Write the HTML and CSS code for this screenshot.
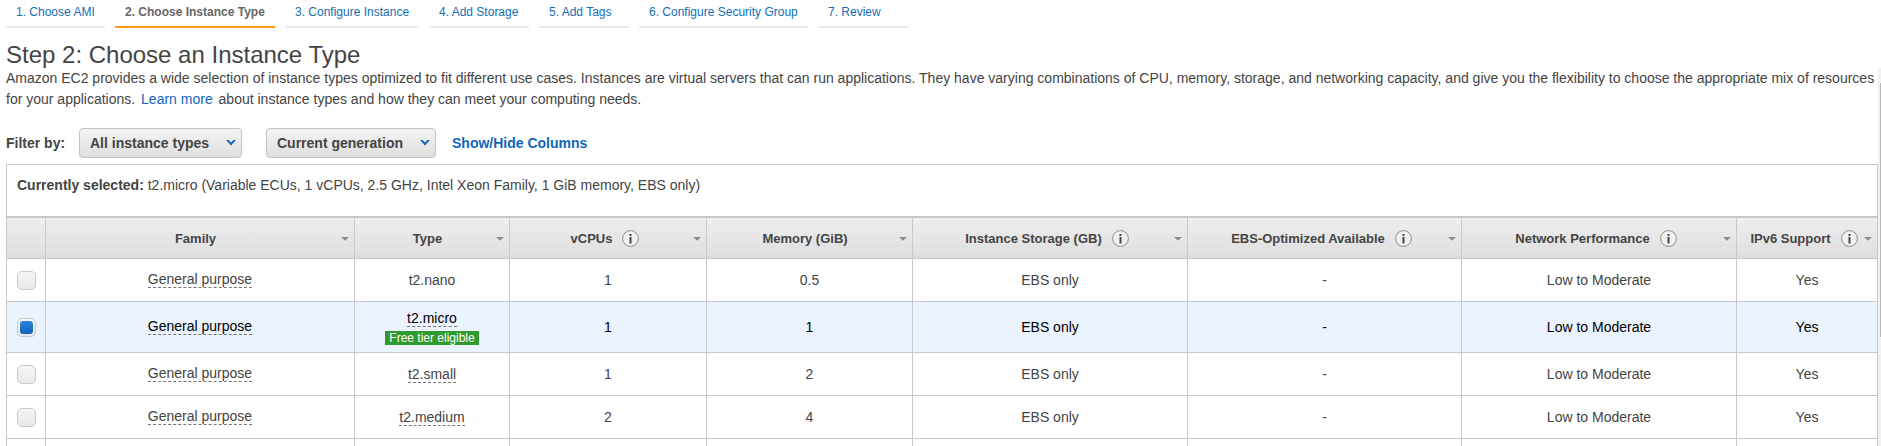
FILE: index.html
```html
<!DOCTYPE html>
<html lang="en">
<head>
<meta charset="utf-8">
<title>Choose an Instance Type</title>
<link rel="stylesheet" href="styles.css">
</head>
<body>
<svg class="defs" width="0" height="0">
  <symbol id="info" viewBox="0 0 17 17"><circle cx="8.5" cy="8.5" r="7.9" fill="#f0f0f0" stroke="#8c8c8c"/><path d="M7.5 4h2v2h-2zM7.5 7h2v6.500h-2z" fill="#444"/></symbol>
  <symbol id="sort" viewBox="0 0 8 5"><path d="M0.500 1h7L4 5z" fill="#fff"/><path d="M0 0h8L4 4z" fill="#8c8c8c"/></symbol>
  <symbol id="chev" viewBox="0 0 10 6"><path d="M0 0h2.600L5 2.400 7.400 0H10L5 5.400z" fill="#1166bb"/></symbol>
</svg>
<nav class="steps">
  <a class="step ami">1. Choose AMI</a>
  <a class="step instance active">2. Choose Instance Type</a>
  <a class="step configure">3. Configure Instance</a>
  <a class="step storage">4. Add Storage</a>
  <a class="step">5. Add Tags</a>
  <a class="step security">6. Configure Security Group</a>
  <a class="step">7. Review</a>
</nav>
<main class="content">
  <h1 class="title">Step 2: Choose an Instance Type</h1>
  <p class="intro">Amazon EC2 provides a wide selection of instance types optimized to fit different use cases. Instances are virtual servers that can run applications. They have varying combinations of CPU, memory, storage, and networking capacity, and give you the flexibility to choose the appropriate mix of resources<br>for your applications. <a class="learn">Learn more</a> about instance types and how they can meet your computing needs.</p>
  <div class="filters">
    <span class="filter-label">Filter by:</span>
    <button class="select types">All instance types<svg class="chev"><use href="#chev"/></svg></button>
    <button class="select generation">Current generation<svg class="chev"><use href="#chev"/></svg></button>
    <a class="columns-link">Show/Hide Columns</a>
  </div>
  <section class="panel">
    <p class="selected"><b>Currently selected:</b> t2.micro (Variable ECUs, 1 vCPUs, 2.5 GHz, Intel Xeon Family, 1 GiB memory, EBS only)</p>
    <div class="grid">
      <div class="row head">
        <div class="cell"></div>
        <div class="cell">Family<svg class="sort"><use href="#sort"/></svg></div>
        <div class="cell">Type<svg class="sort"><use href="#sort"/></svg></div>
        <div class="cell">vCPUs<svg class="info"><use href="#info"/></svg><svg class="sort"><use href="#sort"/></svg></div>
        <div class="cell">Memory (GiB)<svg class="sort"><use href="#sort"/></svg></div>
        <div class="cell">Instance Storage (GB)<svg class="info"><use href="#info"/></svg><svg class="sort"><use href="#sort"/></svg></div>
        <div class="cell">EBS-Optimized Available<svg class="info"><use href="#info"/></svg><svg class="sort"><use href="#sort"/></svg></div>
        <div class="cell">Network Performance<svg class="info"><use href="#info"/></svg><svg class="sort"><use href="#sort"/></svg></div>
        <div class="cell">IPv6 Support<svg class="info"><use href="#info"/></svg><svg class="sort"><use href="#sort"/></svg></div>
      </div>
      <div class="row">
        <div class="cell"><span class="check"></span></div>
        <div class="cell family"><span class="term">General purpose</span></div>
        <div class="cell">t2.nano</div>
        <div class="cell">1</div><div class="cell">0.5</div><div class="cell">EBS only</div><div class="cell">-</div><div class="cell">Low to Moderate</div><div class="cell">Yes</div>
      </div>
      <div class="row chosen">
        <div class="cell"><span class="check checked"></span></div>
        <div class="cell family"><span class="term">General purpose</span></div>
        <div class="cell type"><span class="term">t2.micro</span><span class="badge">Free tier eligible</span></div>
        <div class="cell">1</div><div class="cell">1</div><div class="cell">EBS only</div><div class="cell">-</div><div class="cell">Low to Moderate</div><div class="cell">Yes</div>
      </div>
      <div class="row">
        <div class="cell"><span class="check"></span></div>
        <div class="cell family"><span class="term">General purpose</span></div>
        <div class="cell type"><span class="term">t2.small</span></div>
        <div class="cell">1</div><div class="cell">2</div><div class="cell">EBS only</div><div class="cell">-</div><div class="cell">Low to Moderate</div><div class="cell">Yes</div>
      </div>
      <div class="row">
        <div class="cell"><span class="check"></span></div>
        <div class="cell family"><span class="term">General purpose</span></div>
        <div class="cell type"><span class="term">t2.medium</span></div>
        <div class="cell">2</div><div class="cell">4</div><div class="cell">EBS only</div><div class="cell">-</div><div class="cell">Low to Moderate</div><div class="cell">Yes</div>
      </div>
      <div class="row last">
        <div class="cell"></div><div class="cell"></div><div class="cell"></div><div class="cell"></div><div class="cell"></div><div class="cell"></div><div class="cell"></div><div class="cell"></div><div class="cell"></div>
      </div>
    </div>
  </section>
</main>
<div class="scrollbar"><div class="thumb"></div></div>
</body>
</html>
```
FILE: styles.css
```css
* { box-sizing: border-box; }
body {
  margin: 0;
  height: 446px;
  overflow: hidden;
  position: relative;
  background: #fff;
  color: #444;
  font: 14px/21px "Liberation Sans", Arial, sans-serif;
}
p, h1 { margin: 0; }
.defs { position: absolute; }
.steps { display: flex; gap: 10px; padding-left: 6px; height: 28px; }
.step {
  width: 90px;
  padding: 2px 0 0 10px;
  border-bottom: 2px solid #eaeaea;
  color: #146eb4;
  font-size: 12px;
  line-height: 20px;
  white-space: nowrap;
}
.ami { width: 99px; }
.instance { width: 160px; }
.configure { width: 134px; }
.storage { width: 100px; }
.security { width: 169px; }
.step.active { border-color: #ff9914; color: #666; font-weight: bold; }
.content { padding: 13px 3px 0 6px; }
.title { font-size: 24px; line-height: 27px; font-weight: normal; }
.intro { white-space: nowrap; }
.learn, .columns-link { color: #1166bb; }
.learn { margin: 0 2px; }
.filters { display: flex; align-items: center; height: 30px; margin-top: 18px; font-weight: bold; }
.filter-label { width: 73px; }
.select {
  display: flex;
  align-items: center;
  justify-content: space-between;
  height: 30px;
  padding: 0 5px 0 10px;
  border: 1px solid #c4c4c4;
  border-radius: 4px;
  background: linear-gradient(#f4f4f4, #dfdfdf);
  color: #444;
  font: inherit;
}
.types { width: 163px; margin-right: 24px; }
.generation { width: 170px; margin-right: 16px; }
.chev { width: 10px; height: 6px; }
.panel { margin-top: 6px; border: 1px solid #c9c9c9; border-bottom: 0; }
.selected { height: 51px; padding: 10px; }
.grid { border-top: 2px solid #c9c9c9; }
.row {
  display: grid;
  grid-template-columns: 39px 309px 155px 197px 206px 275px 274px 275px 140px;
  height: 43px;
}
.cell {
  display: flex;
  flex-direction: column;
  align-items: center;
  justify-content: center;
  border-right: 1px solid #c9c9c9;
  border-bottom: 1px solid #c9c9c9;
  position: relative;
}
.cell:last-child { border-right: 0; }
.family { padding-bottom: 2px; }
.head { height: 41px; background: linear-gradient(#eee, #dedede); font-size: 13px; font-weight: bold; }
.head .cell { flex-direction: row; padding-right: 9px; }
.info { width: 17px; height: 17px; margin: 0 -3px 0 10px; }
.sort { position: absolute; right: 5px; top: 19px; width: 8px; height: 5px; }
.chosen { height: 51px; background: #eaf3fe; color: #000; }
.term { padding-top: 1px; line-height: 16px; border-bottom: 1px dashed #777; }
.badge { margin-top: 4px; padding: 0 4px; background: #2f9a30; color: #fff; font-size: 12px; line-height: 14px; }
.check {
  width: 19px;
  height: 19px;
  border: 1px solid #c9c9c9;
  border-radius: 5px;
  background: linear-gradient(#f5f5f5, #e9e9e9);
}
.checked { padding: 2px; }
.checked::before {
  content: "";
  display: block;
  height: 13px;
  border-radius: 3px;
  background: linear-gradient(#2f86dc, #1264b8);
}
.last { height: 7px; }
.last .cell { border-bottom: 0; }
.scrollbar { position: absolute; top: 68px; right: 0; bottom: 0; width: 3px; background: #f1f1f1; }
.thumb { width: 1px; height: 254px; margin: 15px 0 0 2px; background: #b8b8b8; }
```
